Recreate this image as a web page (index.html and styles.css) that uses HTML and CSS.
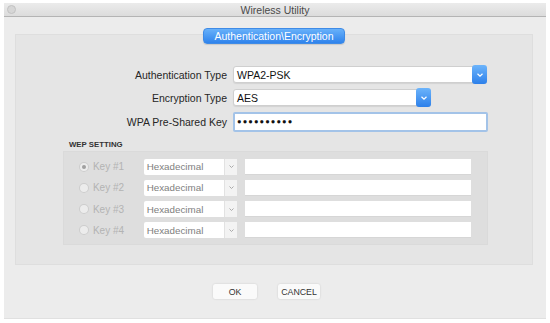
FILE: index.html
```html
<!DOCTYPE html>
<html lang="en">
<head>
<meta charset="UTF-8">
<title>Wireless Utility</title>
<link rel="stylesheet" href="styles.css">
</head>
<body>
<div class="window">
    <div class="titlebar">
        <span class="close"></span>
        <span class="title">Wireless Utility</span>
    </div>
    <div class="panel">
        <div class="tab">Authentication\Encryption</div>
        <div class="form">
            <label class="label">Authentication Type</label>
            <div class="select wide">
                <span class="value">WPA2-PSK</span>
                <span class="arrow"><svg width="8" height="6" viewBox="0 0 8 6"><path d="M1.5 1.8 L4 4.2 L6.5 1.8" fill="none" stroke="#fff" stroke-width="1.2"/></svg></span>
            </div>
            <label class="label">Encryption Type</label>
            <div class="select narrow">
                <span class="value">AES</span>
                <span class="arrow"><svg width="8" height="6" viewBox="0 0 8 6"><path d="M1.5 1.8 L4 4.2 L6.5 1.8" fill="none" stroke="#fff" stroke-width="1.2"/></svg></span>
            </div>
            <label class="label">WPA Pre-Shared Key</label>
            <div class="keyinput">&#9679;&#9679;&#9679;&#9679;&#9679;&#9679;&#9679;&#9679;&#9679;&#9679;</div>
        </div>
        <div class="wep-title">WEP SETTING</div>
        <div class="wep">
            <div class="wep-row">
                <span class="radio checked"></span><span class="key">Key #1</span>
                <div class="hexsel"><span>Hexadecimal</span><span class="hexarrow"><svg width="7" height="5" viewBox="0 0 7 5"><path d="M1.5 1.5 L3.5 3.5 L5.5 1.5" fill="none" stroke="#aaa" stroke-width="1"/></svg></span></div>
                <div class="wepkey"></div>
            </div>
            <div class="wep-row">
                <span class="radio"></span><span class="key">Key #2</span>
                <div class="hexsel"><span>Hexadecimal</span><span class="hexarrow"><svg width="7" height="5" viewBox="0 0 7 5"><path d="M1.5 1.5 L3.5 3.5 L5.5 1.5" fill="none" stroke="#aaa" stroke-width="1"/></svg></span></div>
                <div class="wepkey"></div>
            </div>
            <div class="wep-row">
                <span class="radio"></span><span class="key">Key #3</span>
                <div class="hexsel"><span>Hexadecimal</span><span class="hexarrow"><svg width="7" height="5" viewBox="0 0 7 5"><path d="M1.5 1.5 L3.5 3.5 L5.5 1.5" fill="none" stroke="#aaa" stroke-width="1"/></svg></span></div>
                <div class="wepkey"></div>
            </div>
            <div class="wep-row">
                <span class="radio"></span><span class="key">Key #4</span>
                <div class="hexsel"><span>Hexadecimal</span><span class="hexarrow"><svg width="7" height="5" viewBox="0 0 7 5"><path d="M1.5 1.5 L3.5 3.5 L5.5 1.5" fill="none" stroke="#aaa" stroke-width="1"/></svg></span></div>
                <div class="wepkey"></div>
            </div>
        </div>
    </div>
    <div class="buttons">
        <button type="button" class="btn ok">OK</button>
        <button type="button" class="btn cancel">CANCEL</button>
    </div>
</div>
</body>
</html>
```

FILE: styles.css
```css
* {
    margin: 0;
    padding: 0;
    box-sizing: border-box;
    font-family: 'Liberation Sans', Arial, sans-serif;
}
body {
    background-color: #ffffff;
    padding-top: 3px;
}
.window {
    width: 542px;
    height: 316px;
    margin-left: 4px;
    background: #ececec;
    border-bottom: 1px solid #e0e0e0;
}
.titlebar {
    height: 14px;
    display: flex;
    align-items: center;
    justify-content: center;
    background: linear-gradient(#ebebeb, #dcdcdc);
    border-bottom: 1px solid #b4b4b4;
    position: relative;
}
.close {
    position: absolute;
    left: 3px;
    top: 2px;
    width: 9px;
    height: 9px;
    border-radius: 50%;
    background: #d6d6d6;
    border: 1px solid #c2c2c2;
}
.title {
    font-size: 10.5px;
    color: #4a4a4a;
}
.panel {
    width: 518px;
    height: 231px;
    margin: 17px 0 0 11px;
    background: #e5e5e5;
    border: 1px solid #dedede;
    display: flex;
    flex-direction: column;
}
.tab {
    align-self: center;
    margin-top: -7px;
    height: 16px;
    line-height: 15px;
    padding: 0 10px;
    font-size: 10.5px;
    color: #ffffff;
    border-radius: 4px;
    border: 1px solid #3f8be6;
    background: linear-gradient(#68b1fa, #2f83ec);
    box-shadow: 0 1px 1px rgba(0, 0, 0, 0.12);
}
.form {
    display: grid;
    grid-template-columns: 211px 1fr;
    column-gap: 6px;
    row-gap: 6px;
    margin-top: 22px;
    align-items: center;
}
.label {
    text-align: right;
    font-size: 10.5px;
    color: #262626;
}
.select {
    height: 17px;
    display: flex;
    align-items: center;
    background: #ffffff;
    border: 1px solid #cfcfcf;
    border-radius: 3px;
    box-shadow: 0 1px 1px rgba(0, 0, 0, 0.08);
}
.select.wide {
    width: 254px;
}
.select.narrow {
    width: 198px;
}
.value {
    flex: 1;
    padding-left: 3px;
    font-size: 10.5px;
    color: #111111;
}
.arrow {
    width: 15px;
    height: 19px;
    margin-right: -1px;
    display: flex;
    align-items: center;
    justify-content: center;
    border-radius: 3px;
    background: linear-gradient(#6cb4fb, #2d80ea);
}
.keyinput {
    width: 255px;
    height: 20px;
    background: #ffffff;
    border: 2px solid #a3c3e8;
    border-radius: 2px;
    padding-left: 2px;
    font-size: 7.5px;
    letter-spacing: 1.1px;
    line-height: 16px;
    color: #111111;
}
.wep-title {
    margin: 8px 0 0 53px;
    font-size: 7.8px;
    font-weight: bold;
    line-height: 10px;
    color: #333333;
}
.wep {
    width: 425px;
    margin: 1px 0 0 47px;
    padding: 7px 16px 6px 15px;
    background: #dedede;
    border: 1px solid #dadada;
    display: flex;
    flex-direction: column;
    gap: 6.3px;
}
.wep-row {
    height: 15px;
    display: flex;
    align-items: center;
}
.radio {
    width: 10px;
    height: 10px;
    border-radius: 50%;
    border: 1px solid #cdcdcd;
    background: #ececec;
    display: flex;
    align-items: center;
    justify-content: center;
}
.radio.checked::after {
    content: '';
    width: 4px;
    height: 4px;
    border-radius: 50%;
    background: #a0a0a0;
}
.key {
    width: 55px;
    padding-left: 4px;
    font-size: 10px;
    color: #b3b3b3;
}
.hexsel {
    width: 94px;
    height: 16px;
    display: flex;
    align-items: center;
    background: #ffffff;
    border-radius: 2px;
    font-size: 9.8px;
    color: #808080;
}
.hexsel span:first-child {
    flex: 1;
    padding-left: 3px;
}
.hexarrow {
    width: 13px;
    height: 16px;
    display: flex;
    align-items: center;
    justify-content: center;
    background: #f3f3f3;
    border-left: 1px solid #e2e2e2;
}
.wepkey {
    width: 227px;
    height: 16px;
    margin-left: 8px;
    background: #ffffff;
    border-bottom: 1px solid #d6d6d6;
}
.buttons {
    display: flex;
    justify-content: center;
    gap: 21px;
    padding-right: 17px;
    margin-top: 19px;
}
.btn {
    height: 15px;
    border: none;
    border-radius: 2px;
    background: #fafafa;
    box-shadow: 0 0 2px rgba(0, 0, 0, 0.15);
    font-size: 8.8px;
    color: #333333;
}
.btn.ok {
    width: 44px;
}
.btn.cancel {
    width: 42px;
}
```
